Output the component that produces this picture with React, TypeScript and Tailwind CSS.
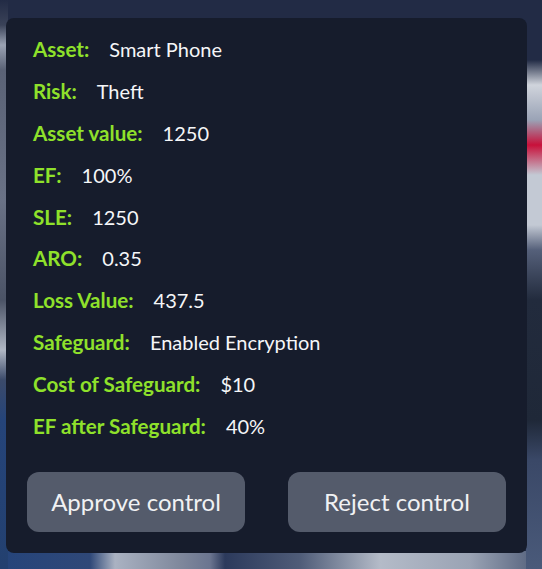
const rows: [string, string][] = [
  ["Asset:", "Smart Phone"],
  ["Risk:", "Theft"],
  ["Asset value:", "1250"],
  ["EF:", "100%"],
  ["SLE:", "1250"],
  ["ARO:", "0.35"],
  ["Loss Value:", "437.5"],
  ["Safeguard:", "Enabled Encryption"],
  ["Cost of Safeguard:", "$10"],
  ["EF after Safeguard:", "40%"],
];

// blurred scene behind the card, painted as gradient strips
const backdrop =
  "bg-[#222b45] [background:linear-gradient(to_bottom,#222b45_0px,#3a4258_25px,#9aa2b3_45px,#5a6276_70px,#6a7286_200px,#4b5366_300px,#b0b7c4_350px,#3b4a6a_380px,#25447a_420px,#23406f_569px)_left_top/8px_100%_no-repeat,linear-gradient(to_bottom,#222b45_0px,#222b45_60px,#d0d4dc_85px,#9aa3b6_120px,#c8103a_145px,#c3c9d4_175px,#c3c9d4_225px,#55607a_250px,#222b3d_300px,#1f2838_420px,#3a4867_460px,#4a5a7a_569px)_right_top/16px_100%_no-repeat,linear-gradient(to_right,#25447a_0px,#2f4878_90px,#aab2c2_115px,#7f889c_180px,#6b7590_210px,#2c3a5c_225px,#4f5c78_300px,#b4bbc8_380px,#9aa3b4_470px,#4f5c78_542px)_left_bottom/100%_18px_no-repeat,#222b45]";

export default function App() {
  return (
    <div
      className={`h-[569px] w-[542px] overflow-hidden pl-[6px] pt-[18px] ${backdrop}`}
      style={{ fontFamily: "Lato, 'Noto Sans', sans-serif" }}
    >
      <div className="flex h-[535px] w-[521px] flex-col rounded-lg bg-[#161c2c] px-[21px] pt-[11px] pb-[21px]">
        <div className="flex flex-col px-[6px]">
          {rows.map(([label, value]) => (
            <div key={label} className="flex h-[41.8px] items-center">
              <div className="flex items-baseline gap-[20px]">
                <span className="text-[20.6px] font-bold text-[#8fe12b]">{label}</span>
                <span className="text-[20px] text-[#f5f6f8]">{value}</span>
              </div>
            </div>
          ))}
        </div>
        <div className="mt-auto flex justify-between">
          <button className="h-[60px] w-[218px] rounded-xl bg-[#545b6b] text-[24px] text-[#f0f1f3]">
            Approve control
          </button>
          <button className="h-[60px] w-[218px] rounded-xl bg-[#545b6b] text-[24px] text-[#f0f1f3]">
            Reject control
          </button>
        </div>
      </div>
    </div>
  );
}
